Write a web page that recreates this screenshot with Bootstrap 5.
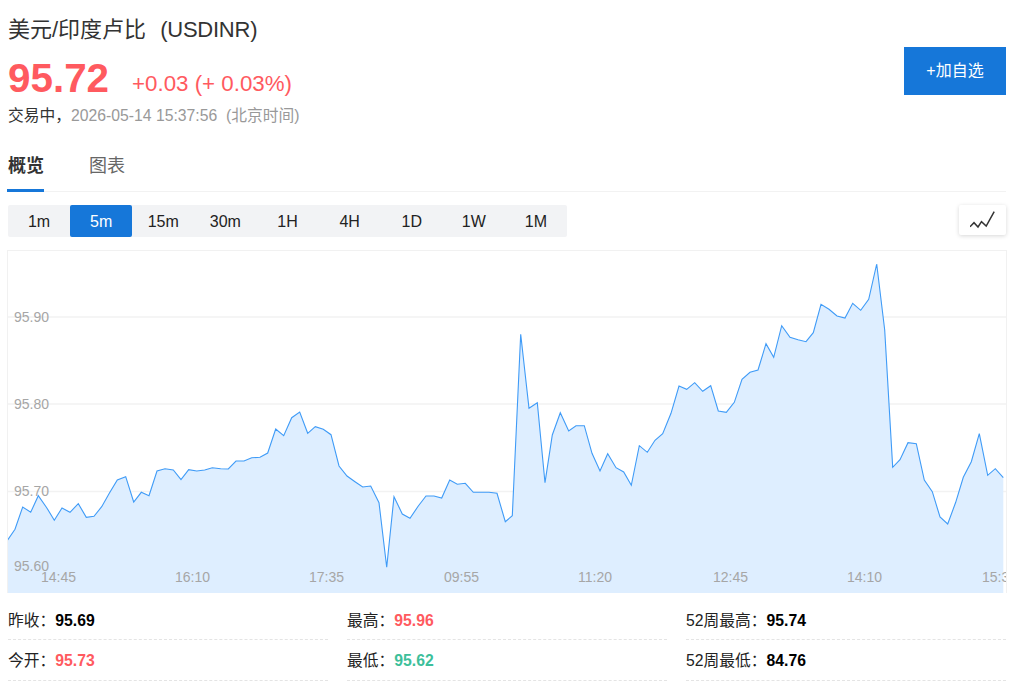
<!DOCTYPE html>
<html lang="zh">
<head>
<meta charset="utf-8">
<title>USDINR</title>
<link href="https://cdn.jsdelivr.net/npm/bootstrap@5.3.0/dist/css/bootstrap.min.css" rel="stylesheet">
<style>
body{font-family:"Liberation Sans","Noto Sans CJK SC",sans-serif;color:#222;background:#fff;overflow:hidden}
.quote-page{padding:15px 18px 0 8px}
.quote-head{height:136px}
.quote-title{font-size:22px;line-height:30px;font-weight:400;margin:0;color:#333}
.quote-title span{margin-left:8px;letter-spacing:-.25px}
.quote-price{height:55px;margin-top:3px}
.price-now{font-size:40.4px;font-weight:700;color:#ff5a5f;line-height:60px}
.price-change{font-size:22.3px;color:#ff5a5f;margin-left:23px;line-height:60px;padding-top:6px}
.quote-status{font-size:15.75px;line-height:24px;color:#999;padding-top:1px}
.quote-status b{font-weight:400;color:#333}
.watch-btn{width:102px;height:48px;margin-top:32px;background:#1677d9;color:#fff;font-size:16px;border:0;border-radius:0;padding:0}
.watch-btn:hover{background:#1677d9;color:#fff}
.quote-tabs{height:42px;border-bottom:1px solid #f2f2f2;gap:44px;margin-top:-1px;margin-left:-1px}
.quote-tab{font-size:18px;line-height:26px;padding:0 0 8px 0;color:#666;width:37px;text-align:right;height:42px;white-space:nowrap;background:none;border:0;border-bottom:3px solid transparent}
.quote-tab.on{font-weight:700;color:#333;border-bottom-color:#1677d9}
.range-row{height:58px;padding-top:13px}
.range-bar{background:#f2f3f5;height:32px;border-radius:2px}
.range-btn{width:62.11px;height:32px;font-size:16px;line-height:32px;padding:1px 0 0;border:0;border-radius:2px;background:transparent;color:#222}
.range-btn.on{background:#1677d9;color:#fff}
.chart-toggle{width:47px;height:30px;background:#fff;border:0;border-radius:2px;box-shadow:0 1px 4px rgba(0,0,0,.16);padding:0}
.chart-box{margin:0 -1px;height:343px;border:1px solid #f1f1f1;border-bottom:0;overflow:hidden}
.chart-box svg{display:block}
.chart-box text{font-family:"Liberation Sans",sans-serif;font-size:14px;fill:#a6a6a6}
.stat-grid{display:grid;grid-template-columns:repeat(3,320px);column-gap:19px}
.stat-item{line-height:55px;height:46.5px;font-size:15.75px;color:#222;border-bottom:1px dashed #e4e4e4;white-space:nowrap}
.stat-grid .low{height:41px;line-height:42px}
.stat-item b{color:#000}
.stat-item b.up{color:#ff5a5f}
.stat-item b.down{color:#3dbf9b}
</style>
</head>
<body>
<div class="quote-page">
  <div class="quote-head d-flex justify-content-between">
    <div>
      <h1 class="quote-title">美元/印度卢比 <span>(USDINR)</span></h1>
      <div class="quote-price d-flex align-items-start">
        <span class="price-now">95.72</span>
        <span class="price-change">+0.03 (+ 0.03%)</span>
      </div>
      <div class="quote-status"><b>交易中，</b>2026-05-14 15:37:56 &nbsp;(北京时间)</div>
    </div>
    <button class="btn watch-btn" type="button">+加自选</button>
  </div>
  <div class="quote-tabs d-flex">
    <button class="quote-tab on" type="button">概览</button>
    <button class="quote-tab" type="button">图表</button>
  </div>
  <div class="range-row d-flex justify-content-between align-items-start">
    <div class="range-bar d-flex">
      <button class="range-btn" type="button">1m</button>
      <button class="range-btn on" type="button">5m</button>
      <button class="range-btn" type="button">15m</button>
      <button class="range-btn" type="button">30m</button>
      <button class="range-btn" type="button">1H</button>
      <button class="range-btn" type="button">4H</button>
      <button class="range-btn" type="button">1D</button>
      <button class="range-btn" type="button">1W</button>
      <button class="range-btn" type="button">1M</button>
    </div>
    <button class="chart-toggle d-flex align-items-center justify-content-center" type="button" aria-label="图表类型">
      <svg width="26" height="18" viewBox="0 0 26 18"><path d="M0 15.7 4 11.7 8 16 11.5 10.7 16.2 15 24.2 .7" fill="none" stroke="#333" stroke-width="1.5"/></svg>
    </button>
  </div>
  <div class="chart-box">
    <svg width="998" height="342" viewBox="8 251 998 342">
      <g stroke="#f2f2f2" stroke-width="1.4">
        <line x1="8" x2="1006" y1="317" y2="317"/>
        <line x1="8" x2="1006" y1="404" y2="404"/>
        <line x1="8" x2="1006" y1="491.5" y2="491.5"/>
      </g>
      <path fill="#deeeff" d="M7.7 593V540L15 529.3 22.7 507 30.7 512.3 38.3 495.7 46.7 507.7 54.3 520.3 62 508 70 512.3 78.3 503.7 86.3 517.3 94 516.3 101.7 506.7 109.3 493.3 117.3 480 125.7 476.7 133.7 502 141.3 492.3 149 495.7 157 471 165 468.7 173.3 470 181 479.7 188.7 469.7 196.7 471 204.7 470 212.3 467.7 220.7 468.7 228.3 469 236 461 244 461 251.7 457.7 260 457.3 267.7 453 275.7 429 283.7 435.7 291.7 417.7 299.7 412 307.7 433.3 315.3 426.7 323.3 429.3 331 434.7 339 466 347 476 355 481.7 362.7 487 370.7 486 379 502.7 386.7 567.3 394 496.7 402.3 514 410 518.3 418.3 506 426 496 434 496 441.7 498 449.7 480 457.3 484.3 465.3 483.3 473.3 492.3 481.3 492.3 489 492.3 497 493.3 505.3 521.7 512.3 515.7 520.7 334.3 529 408.3 537.3 402.7 545 482.7 552.3 435 560.3 412.7 568.7 431 576 425.7 584.3 425.7 592 453.3 600 471 607.7 453.7 616 467.7 623.7 472 631.3 485.3 639.3 445.7 647.3 452.3 655 440.3 662.7 433.7 671 413.3 679 386 686.7 389.3 694.7 382.7 702.7 391.3 710.7 385.7 718.3 411 726.3 412.3 734.3 402.3 742 379.3 750 372.3 758 370 766 343.7 773.7 357.3 781.7 325.7 790 337.3 798 339.7 806 341.7 813.3 332.7 821 304.3 829 309.3 837 316 845 318 852.7 303.3 860.7 310.3 868.7 299.3 876.7 264 884.7 330 892.7 467.3 900 459.7 908 442.7 916.3 443.7 924.3 480 932.3 491.7 940 517 947.7 524 955.7 502.3 963.3 477.3 971.3 461.7 979.3 433.7 987.7 475.3 995.3 468.7 1003.3 477.7V593Z"/>
      <path fill="none" stroke="#3f9bf7" stroke-width="1.1" d="M7.7 540L15 529.3 22.7 507 30.7 512.3 38.3 495.7 46.7 507.7 54.3 520.3 62 508 70 512.3 78.3 503.7 86.3 517.3 94 516.3 101.7 506.7 109.3 493.3 117.3 480 125.7 476.7 133.7 502 141.3 492.3 149 495.7 157 471 165 468.7 173.3 470 181 479.7 188.7 469.7 196.7 471 204.7 470 212.3 467.7 220.7 468.7 228.3 469 236 461 244 461 251.7 457.7 260 457.3 267.7 453 275.7 429 283.7 435.7 291.7 417.7 299.7 412 307.7 433.3 315.3 426.7 323.3 429.3 331 434.7 339 466 347 476 355 481.7 362.7 487 370.7 486 379 502.7 386.7 567.3 394 496.7 402.3 514 410 518.3 418.3 506 426 496 434 496 441.7 498 449.7 480 457.3 484.3 465.3 483.3 473.3 492.3 481.3 492.3 489 492.3 497 493.3 505.3 521.7 512.3 515.7 520.7 334.3 529 408.3 537.3 402.7 545 482.7 552.3 435 560.3 412.7 568.7 431 576 425.7 584.3 425.7 592 453.3 600 471 607.7 453.7 616 467.7 623.7 472 631.3 485.3 639.3 445.7 647.3 452.3 655 440.3 662.7 433.7 671 413.3 679 386 686.7 389.3 694.7 382.7 702.7 391.3 710.7 385.7 718.3 411 726.3 412.3 734.3 402.3 742 379.3 750 372.3 758 370 766 343.7 773.7 357.3 781.7 325.7 790 337.3 798 339.7 806 341.7 813.3 332.7 821 304.3 829 309.3 837 316 845 318 852.7 303.3 860.7 310.3 868.7 299.3 876.7 264 884.7 330 892.7 467.3 900 459.7 908 442.7 916.3 443.7 924.3 480 932.3 491.7 940 517 947.7 524 955.7 502.3 963.3 477.3 971.3 461.7 979.3 433.7 987.7 475.3 995.3 468.7 1003.3 477.7"/>
      <text x="14" y="321.5">95.90</text>
      <text x="14" y="408.5">95.80</text>
      <text x="14" y="496">95.70</text>
      <text x="14" y="571">95.60</text>
      <text x="41" y="582">14:45</text>
      <text x="175" y="582">16:10</text>
      <text x="309" y="582">17:35</text>
      <text x="444" y="582">09:55</text>
      <text x="578" y="582">11:20</text>
      <text x="713" y="582">12:45</text>
      <text x="847" y="582">14:10</text>
      <text x="982" y="582">15:30</text>
    </svg>
  </div>
  <div class="stat-grid">
    <div class="stat-item">昨收：<b>95.69</b></div>
    <div class="stat-item">最高：<b class="up">95.96</b></div>
    <div class="stat-item">52周最高：<b>95.74</b></div>
    <div class="stat-item low">今开：<b class="up">95.73</b></div>
    <div class="stat-item low">最低：<b class="down">95.62</b></div>
    <div class="stat-item low">52周最低：<b>84.76</b></div>
  </div>
</div>
<script src="https://cdn.jsdelivr.net/npm/bootstrap@5.3.0/dist/js/bootstrap.bundle.min.js"></script>
</body>
</html>
